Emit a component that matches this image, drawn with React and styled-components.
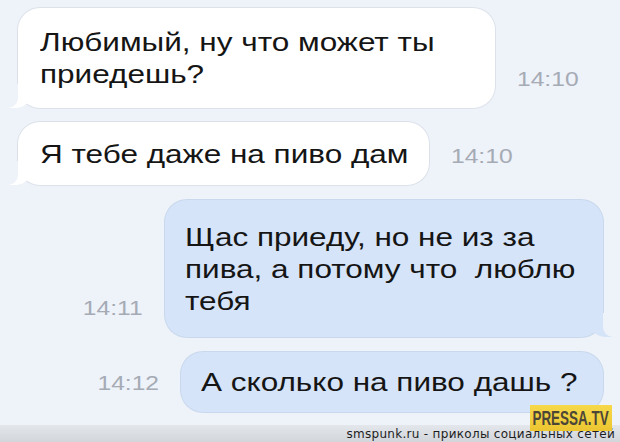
import React from 'react';
import styled, { createGlobalStyle } from 'styled-components';

const GlobalStyle = createGlobalStyle`
  html, body {
    margin: 0;
    padding: 0;
    background: #eef2f9;
  }
`;

const Page = styled.div`
  width: 620px;
  height: 442px;
  display: flex;
  flex-direction: column;
  position: relative;
  overflow: hidden;
  background: #eef2f9;
  font-family: 'Liberation Sans', Arial, sans-serif;
`;

const Chat = styled.div`
  flex: 1;
  display: flex;
  flex-direction: column;
  gap: 14px;
  padding: 8px 17px 0 18px;
`;

const Row = styled.div`
  display: flex;
  align-items: flex-end;
  justify-content: ${(p) => (p.$out ? 'flex-end' : 'flex-start')};
  gap: 22px;
  margin-top: ${(p) => p.$mt || 0}px;
`;

const Bubble = styled.div`
  position: relative;
  box-sizing: border-box;
  width: ${(p) => p.$w}px;
  padding: ${(p) => p.$py}px 20px;
  padding-left: ${(p) => (p.$out ? 20 : 22)}px;
  border-radius: 22px;
  background: ${(p) => (p.$out ? '#d5e4f8' : '#ffffff')};
  box-shadow: 0 0 0 1px ${(p) => (p.$out ? '#c9d8ec' : '#dde2ea')};
  color: #151515;
  font-size: 25px;
  line-height: 32px;
  white-space: nowrap;

  ${(p) =>
    p.$tail &&
    (p.$out
      ? `
    &::before {
      content: '';
      position: absolute;
      bottom: 0;
      right: -9px;
      width: 22px;
      height: 22px;
      background: #d5e4f8;
      border-bottom-left-radius: 16px 14px;
    }
    &::after {
      content: '';
      position: absolute;
      bottom: 0;
      right: -12px;
      width: 12px;
      height: 24px;
      background: #eef2f9;
      border-bottom-left-radius: 10px;
    }`
      : `
    &::before {
      content: '';
      position: absolute;
      bottom: 0;
      left: -9px;
      width: 22px;
      height: 22px;
      background: #ffffff;
      border-bottom-right-radius: 16px 14px;
    }
    &::after {
      content: '';
      position: absolute;
      bottom: 0;
      left: -12px;
      width: 12px;
      height: 24px;
      background: #eef2f9;
      border-bottom-right-radius: 10px;
    }`)}
`;

/* the screenshot is stretched sideways, so glyphs get widened */
const Text = styled.span`
  display: inline-block;
  transform: scaleX(1.26);
  transform-origin: left top;
`;

const Time = styled.span`
  display: inline-block;
  font-size: 20px;
  line-height: 18px;
  margin-bottom: 20px;
  color: #a5abb5;
  white-space: nowrap;
  transform: scaleX(1.23);
  transform-origin: ${(p) => (p.$out ? 'right' : 'left')} center;
`;

const Footer = styled.div`
  height: 17px;
  background: linear-gradient(#e3e6ea, #d2d5da);
  display: flex;
  justify-content: flex-end;
  align-items: flex-end;
  padding-right: 5px;
  font-family: 'DejaVu Sans', sans-serif;
  font-size: 12px;
  line-height: 15px;
  letter-spacing: 0.3px;
  color: #1d1d1d;
`;

const Badge = styled.div`
  position: absolute;
  right: 8px;
  bottom: 11px;
  width: 82px;
  height: 26px;
  display: flex;
  align-items: center;
  justify-content: center;
  background: linear-gradient(#f6d84a, #ecc631);
  color: #4b4637;
  font-family: 'Liberation Sans', sans-serif;
  font-weight: 700;
  font-size: 21px;
`;

const BadgeText = styled.span`
  display: inline-block;
  transform: scaleX(0.64);
  white-space: nowrap;
`;

const App = () => (
  <Page>
    <GlobalStyle />
    <Chat>
      <Row>
        <Bubble $w={477} $py={18} $tail>
          <Text>
            Любимый, ну что может ты
            <br />
            приедешь?
          </Text>
        </Bubble>
        <Time>14:10</Time>
      </Row>
      <Row>
        <Bubble $w={411} $py={15.5} $tail>
          <Text>Я тебе даже на пиво дам</Text>
        </Bubble>
        <Time>14:10</Time>
      </Row>
      <Row $out $mt={1}>
        <Time $out>14:11</Time>
        <Bubble $out $w={438} $py={20.5} $tail>
          <Text>
            Щас приеду, но не из за
            <br />
            пива, а потому что&nbsp; люблю
            <br />
            тебя
          </Text>
        </Bubble>
      </Row>
      <Row $out $mt={1}>
        <Time $out>14:12</Time>
        <Bubble $out $w={422} $py={14}>
          <Text>А сколько на пиво дашь ?</Text>
        </Bubble>
      </Row>
    </Chat>
    <Footer>smspunk.ru - приколы социальных сетей</Footer>
    <Badge>
      <BadgeText>PRESSA.TV</BadgeText>
    </Badge>
  </Page>
);

export default App;
